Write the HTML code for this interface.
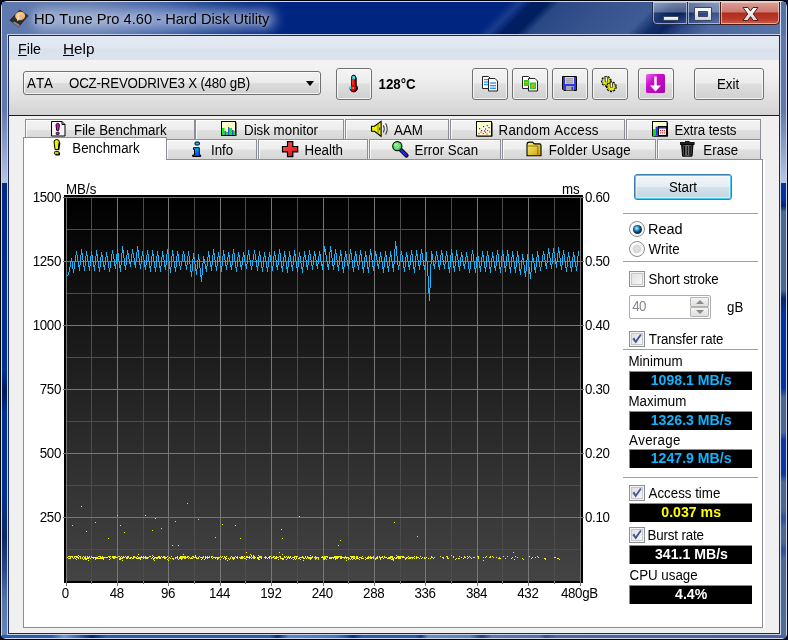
<!DOCTYPE html>
<html><head><meta charset="utf-8"><title>HD Tune Pro 4.60 - Hard Disk Utility</title>
<style>
*{box-sizing:border-box;margin:0;padding:0}
html,body{width:788px;height:640px;overflow:hidden;background:#04071c}
body{font-family:"Liberation Sans",sans-serif;font-size:13.33px;color:#000;position:relative;font-kerning:none}
#win{position:absolute;left:0;top:0;width:788px;height:640px;overflow:hidden;border-radius:7px 7px 6px 6px;background:#000}
#win>div{position:absolute}
#frame{left:1px;top:1px;width:786px;height:638px;border-radius:6px 6px 5px 5px;background:#002a8a;box-shadow:inset 0 0 0 1px #cfd8ec}
#frameL,#frameR{top:30px;width:5px;height:606px;background:linear-gradient(#5f79af 0,#5f79af 80px,#b9c6e4 153px,#002a8a 153px,#00328f 340px,#001a58 362px,#00328f 382px,#00328f 465px,#0a2868 507px,#27498f 540px,#5375ad 570px,#6586bb 606px)}
#frameL{left:2px}
#frameR{left:781px;background:linear-gradient(#5f79af 0,#5f79af 80px,#b9c6e4 153px,#0034a0 153px,#0034a0 170px,#0a2560 176px,#4a6896 182px,#4a6896 260px,#0a2560 268px,#0034a0 285px,#0034a0 358px,#4a6890 368px,#4a6890 402px,#0a38a0 410px,#0a38a0 444px,#4a6890 452px,#4a6890 480px,#2a50a0 488px,#4a6890 498px,#4a6890 512px,#2a50a0 520px,#4a6890 530px,#4f6e9a 606px)}
#frameB{left:2px;top:635px;width:784px;height:3px;background:linear-gradient(90deg,#2d5cab 0,#2d5cab 50px,#7a9ad0 62px,#3a66b0 76px,#06245e 90px,#2d5cab 104px,#2d5cab 268px,#0a2a6a 276px,#5a86c8 287px,#4a78c0 333px,#2d5cab 343px,#0e2e6e 351px,#2d5cab 360px,#2d5cab 413px,#1a3a78 419px,#6a8cb8 426px,#5f82b2 468px,#1e3e78 480px,#5a7aaa 490px,#52729f 538px,#2f4f84 544px,#4a6a9c 554px,#46669a 784px)}
#title{left:2px;top:2px;width:784px;height:33px;overflow:hidden;background:#002580}
#glow{position:absolute;left:-2px;top:0;width:330px;height:33px;background:linear-gradient(90deg,#5f79af 0,#5f79af 90px,#3d5ca4 160px,#123a8c 215px,#002580 250px)}
#glow2{position:absolute;left:30px;top:7px;width:244px;height:21px;border-radius:10px;background:rgba(220,228,246,.5);filter:blur(6px)}
#streaks{position:absolute;left:430px;top:0;width:354px;height:33px;overflow:hidden}
#streaks i{position:absolute;left:-40px;top:0;width:440px;height:33px;transform:skewX(-45deg);background:linear-gradient(90deg,#002580 0,#002580 100px,#1a3b8c 112px,#0c2c7c 118px,#001f60 124px,#001f60 140px,#2a4885 152px,#36538e 200px,#3f5b95 250px,#12306c 268px,#0c2560 282px,#2c4a88 300px,#4c689f 326px,#5673aa 400px,#5a76ac 440px)}
#edge{left:7px;top:34px;width:774px;height:601px;border:1px solid #c8d2ea;box-shadow:inset 0 0 0 1px #1a2a5a}
.ttl{text-shadow:0 0 5px rgba(255,255,255,.55)}
#cap{left:652px;top:2px;width:128px;height:23px}
.cbt{position:absolute;top:0;height:23px;border:1px solid #222c46;border-top:none;background:linear-gradient(rgba(255,255,255,.40) 0,rgba(255,255,255,.26) 45%,rgba(0,0,30,.14) 50%,rgba(255,255,255,.05) 100%);box-shadow:inset 0 0 0 1px rgba(220,230,245,.6)}
.cbt.red{background:linear-gradient(#dba098 0,#cb7a71 45%,#b22c1d 50%,#b93a2a 78%,#c8604a 100%);border-color:#4a1a16;box-shadow:inset 0 0 0 1px rgba(255,225,220,.6)}
#client{left:9px;top:36px;width:770px;height:597px;background:#f0f0f0}
#menubar{left:9px;top:36px;width:770px;height:24px;background:linear-gradient(#e2e9f2,#dfe6f0 50%,#d9e1ec 55%,#dbe3ee)}
.t{white-space:nowrap;line-height:1}
#combo{left:23px;top:71px;width:298px;height:24px;border:1px solid #707070;border-radius:3px;background:linear-gradient(#f2f2f2,#ebebeb 48%,#dddddd 52%,#cfcfcf);box-shadow:inset 0 0 0 1px rgba(255,255,255,.7)}
.btn{border:1px solid #707070;border-radius:3px;background:linear-gradient(#f3f3f3,#ececec 46%,#dedede 50%,#d0d0d0);box-shadow:inset 0 0 0 1px rgba(255,255,255,.75)}
#panel{left:23px;top:159px;width:740px;height:469px;background:#fff;border:1px solid #8b8e97}
.tab{border:1px solid #8b8e97;border-bottom:none;background:linear-gradient(#f3f3f3,#ededed 48%,#e0e0e0 52%,#d6d6d6);box-shadow:inset 1px 1px 0 rgba(255,255,255,.8)}
#seltab{left:23px;top:137px;width:144px;height:23px;background:#fff;border:1px solid #8b8e97;border-bottom:none}
.lcd{background:#000;width:123px;height:19px;left:629px;border-top:1px solid #8a8a8a;border-left:1px solid #8a8a8a;text-align:center;font-weight:bold;font-size:13.33px;line-height:18px;white-space:nowrap}
.lcd span{display:inline-block;transform:scale(1.06,1.04);transform-origin:50% 80%}
.cb{width:16px;height:16px;border:1px solid #8e8f8f;background:linear-gradient(135deg,#dcdcdc,#fbfbfb);box-shadow:inset 0 0 0 1px #f4f4f4, inset 0 0 0 2px #c4c8cc}
.cb svg{position:absolute;left:-1px;top:-1px}
.sep{height:1px;background:#a0a0a0;left:623px;width:135px}
#start{left:634px;top:174px;width:98px;height:26px;border:1px solid #3c7fb1;border-radius:3px;background:linear-gradient(#f2f6f9,#e6eef3 48%,#d3e1e9 52%,#c4d8e3);box-shadow:inset 0 0 0 1px #45cdf6, inset 0 0 0 2px rgba(255,255,255,.45)}
.radio{width:16px;height:16px;border-radius:50%;border:1px solid #8a8c8e;background:radial-gradient(circle at 50% 50%,#e2e4e6 0,#d4d6d9 3.6px,#f4f4f4 4.6px,#fff 5.2px,#fafafa 7px)}
.radio.on::after{content:"";position:absolute;left:2.5px;top:2.5px;width:9px;height:9px;border-radius:50%;background:radial-gradient(circle 5.2px at 42% 38%,#c4f2ff 0,#37a8dc 35%,#1a5a8c 62%,#0e2e4c 85%,#142f4a 100%)}
#spin{left:629px;top:295px;width:82px;height:24px;border:1px solid #abadb3;border-radius:2px;background:#fff}
.spb{width:19px;height:10px;border:1px solid #b4b4b4;border-radius:1px;background:linear-gradient(#f4f4f4,#dedede)}
.spb i{position:absolute;left:4.5px;width:0;height:0;border-left:4px solid transparent;border-right:4px solid transparent}
.spb i.up{top:1.5px;border-bottom:4.5px solid #8a8a8a}
.spb i.dn{top:2px;border-top:4.5px solid #8a8a8a}
#toolbar{left:9px;top:60px;width:770px;height:55px;background:linear-gradient(#f3f3f3 0,#f0f0f0 30%,#e2e2e2 65%,#d3d3d3 100%)}
#rline{left:780px;top:2px;width:1px;height:32px;background:rgba(232,238,250,.85)}
</style></head><body>
<div id="win">
<div id="frame"></div>
<div id="frameL"></div><div id="frameR"></div><div id="frameB"></div>
<div id="title"><div id="glow"></div><div id="glow2"></div><div id="streaks"><i></i></div></div>
<div id="edge"></div><div id="rline"></div>
<svg style="position:absolute;left:8px;top:7.5px" width="22" height="22" viewBox="8 7 22 22">
<defs><radialGradient id="pl" cx=".45" cy=".4" r=".6"><stop offset="0" stop-color="#ffe2b0"/><stop offset="1" stop-color="#f0a850"/></radialGradient></defs>
<polygon points="19.7,9 28.2,14.8 18.5,26 9.8,19.3" fill="#2c2c30" stroke="#1c1c20" stroke-width=".6"/>
<polygon points="14.5,20.5 20,24 18.5,26 12.6,21.6" fill="#9a9aa0" opacity=".8"/>
<ellipse cx="20.2" cy="15" rx="5.1" ry="4.3" fill="url(#pl)" transform="rotate(-12 20.2 15)"/>
<ellipse cx="20.6" cy="15" rx="1.5" ry="1.3" fill="#b8b8c4"/>
<path d="M17.6 19.8 L18.8 16" stroke="#f4f4f4" stroke-width="1"/>
</svg>
<div class="t ttl" style="top:10.90px;font-size:15px;left:34px;transform:scale(0.977,1);transform-origin:0 12.70px;">HD Tune Pro 4.60 - Hard Disk Utility</div>

<div id="cap">
<div class="cbt" style="left:0;width:36px;border-radius:0 0 0 5px"></div>
<div class="cbt" style="left:35px;width:34px"></div>
<div class="cbt red" style="left:68px;width:60px;border-radius:0 0 5px 0"></div>
<svg style="position:absolute;left:0;top:-1px" width="128" height="24"><defs><linearGradient id="xg" x1="0" y1="0" x2="0" y2="1"><stop offset="0" stop-color="#fff"/><stop offset="1" stop-color="#d4d4d8"/></linearGradient></defs>
<rect x="11.5" y="15.5" width="15" height="4" fill="url(#xg)" stroke="#3a4660" stroke-width="1"/>
<path d="M42.5 6.5h17v13h-17z M46.5 10.5v5h9v-5z" fill="url(#xg)" fill-rule="evenodd" stroke="#3a4660" stroke-width="1"/>
<path d="M91 6.5 h5 l2.5 3.6 l2.5 -3.6 h5 l-4.8 6.4 l5 6.6 h-5 l-2.7 -3.9 l-2.7 3.9 h-5 l5 -6.6 z" fill="url(#xg)" stroke="#4a2220" stroke-width="1"/>
</svg></div>
<div id="client"></div><div id="menubar"></div>
<div class="t " style="top:41.10px;font-size:15px;left:18px;transform:scale(0.95,1);transform-origin:0 12.70px;"><u>F</u>ile</div>

<div class="t " style="top:41.10px;font-size:15px;left:62.5px;transform:scale(1.02,1);transform-origin:0 12.70px;"><u>H</u>elp</div>

<div id="toolbar"></div>
<div style="left:9px;top:115px;width:770px;height:1px;background:#1c1c1c"></div>
<div id="combo"></div>
<div class="t " style="top:77.22px;font-size:13.33px;left:27px;transform:scale(1,1.09);transform-origin:0 11.28px;">ATA</div>

<div class="t " style="top:77.22px;font-size:13.33px;left:69px;transform:scale(1,1.09);transform-origin:0 11.28px;letter-spacing:-.2px;">OCZ-REVODRIVE3 X (480 gB)</div>

<div style="left:305.5px;top:81px;width:0;height:0;border-left:4.5px solid transparent;border-right:4.5px solid transparent;border-top:5px solid #000"></div>
<div class="btn" style="left:336px;top:68px;width:36px;height:32px"></div>
<div class="btn" style="left:472px;top:68px;width:36px;height:32px"></div>
<div class="btn" style="left:512px;top:68px;width:36px;height:32px"></div>
<div class="btn" style="left:552px;top:68px;width:36px;height:32px"></div>
<div class="btn" style="left:592px;top:68px;width:36px;height:32px"></div>
<div class="btn" style="left:638px;top:68px;width:36px;height:32px"></div>
<div class="btn" style="left:694px;top:68px;width:70px;height:32px"></div>
<div class="t " style="top:78.42px;font-size:13.33px;left:378.5px;transform:scale(1,1.09);transform-origin:0 11.28px;font-weight:bold;">128°C</div>

<div class="t " style="top:78.22px;font-size:13.33px;left:628px;width:200px;text-align:center;transform:scale(1,1.09);transform-origin:50% 11.28px;">Exit</div>

<svg style="position:absolute;left:0;top:60px" width="788" height="50" viewBox="0 60 788 50">
<defs>
<linearGradient id="mg" x1="0" y1="0" x2="1" y2="1"><stop offset="0" stop-color="#e46ae4"/><stop offset=".35" stop-color="#cc10cc"/><stop offset="1" stop-color="#a800a8"/></linearGradient>
</defs>
<!-- thermometer -->
<g>
<path d="M351.7 77 a2 1.8 0 0 1 4 0 v8.4 a3.7 3.5 0 1 1 -4 0 z" fill="#e80000" stroke="#000" stroke-width="1"/>
<path d="M356 77.5v8 a3.6 3.4 0 0 1 -1.5 5.6" fill="none" stroke="#000" stroke-width="1.3"/>
<rect x="352.2" y="76.2" width="3" height="3" fill="#30e4f0"/>
<rect x="349.6" y="86" width="1.5" height="3" fill="#40e0f0"/>
<rect x="352.6" y="87.4" width="1.3" height="1.3" fill="#fff"/>
<rect x="352.4" y="79.4" width=".9" height="5.6" fill="#ff6060"/>
</g>
<!-- copy text -->
<g stroke="#222" stroke-width="1">
<path d="M482.5 76.5h6l2 2v10h-8z" fill="#fff"/>
<path d="M488.5 78.5h6.5l2.5 2.5v10h-9z" fill="#fff"/>
</g>
<g fill="#1e8cff"><rect x="484" y="79" width="4" height="1.2"/><rect x="484" y="81.5" width="4" height="1.2"/><rect x="484" y="84" width="4" height="1.2"/>
<rect x="490" y="82.4" width="6" height="1.3"/><rect x="490" y="85" width="6" height="1.3"/><rect x="490" y="87.6" width="6" height="1.3"/></g>
<!-- copy screenshot -->
<g stroke="#222" stroke-width="1">
<path d="M522.5 76.5h6l2 2v10h-8z" fill="#fff"/>
<path d="M528.5 78.5h6.5l2.5 2.5v10h-9z" fill="#fff"/>
</g>
<rect x="524" y="80" width="5" height="6" fill="#30c830"/><rect x="525.5" y="82" width="2.2" height="2.4" fill="#f0d000"/><rect x="526.2" y="83" width="1" height="1" fill="#e02020"/>
<rect x="530" y="82.5" width="6" height="6.5" fill="#30c830"/><rect x="531.5" y="84.5" width="3" height="3" fill="#f0d000"/><rect x="532.5" y="85.5" width="1.2" height="1.2" fill="#e02020"/>
<!-- floppy -->
<path d="M562.5 76.5h14v14h-12.5l-1.5-1.5z" fill="#3434e8" stroke="#000" stroke-width="1"/>
<rect x="565" y="77" width="9" height="7" fill="#d8d8d8"/>
<g fill="#8a8a8a"><rect x="566" y="78.4" width="7" height="1"/><rect x="566" y="80.4" width="7" height="1"/><rect x="566" y="82.4" width="7" height="1"/></g>
<rect x="566" y="86" width="8" height="4.5" fill="#a8a8a8"/><rect x="571.4" y="86.8" width="1.8" height="3.2" fill="#3434e8"/>
<!-- gears -->
<g><circle cx="606.3" cy="81.3" r="3.8" fill="#000" stroke="#000" stroke-width="3.2" stroke-dasharray="1.645 1.008"/><circle cx="606.3" cy="81.3" r="3.4" fill="#eeee00" stroke="#e6e600" stroke-width="1.6" stroke-dasharray="0.997 1.377" stroke-dashoffset="-0.237"/><path d="M606.3 75.89999999999999 l1.1 1.6 v4.4 h-2.2 v-4.4 z" fill="#d0d0d4" stroke="#2a2a2a" stroke-width=".7"/><rect x="606.0999999999999" y="77.7" width=".8" height="4" fill="#fff"/><circle cx="611.4" cy="86.8" r="3.8" fill="#000" stroke="#000" stroke-width="3.2" stroke-dasharray="1.645 1.008"/><circle cx="611.4" cy="86.8" r="3.4" fill="#eeee00" stroke="#e6e600" stroke-width="1.6" stroke-dasharray="0.997 1.377" stroke-dashoffset="-0.237"/><path d="M611.4 81.39999999999999 l1.1 1.6 v4.4 h-2.2 v-4.4 z" fill="#d0d0d4" stroke="#2a2a2a" stroke-width=".7"/><rect x="611.1999999999999" y="83.2" width=".8" height="4" fill="#fff"/></g>
<!-- download -->
<rect x="646" y="74" width="19" height="19" rx="1.5" fill="url(#mg)"/>
<path d="M654.3 76.5h2.4v9h4.3l-5.5 6l-5.5-6h4.3z" fill="#fff"/>
</svg>

<div id="panel"></div><div style="left:763px;top:160px;width:2px;height:468px;background:#fff"></div>
<div class="tab" style="left:25px;top:119px;width:170px;height:21px"></div>
<div class="tab" style="left:195px;top:119px;width:149px;height:21px"></div>
<div class="tab" style="left:345px;top:119px;width:104px;height:21px"></div>
<div class="tab" style="left:450px;top:119px;width:175px;height:21px"></div>
<div class="tab" style="left:626px;top:119px;width:135px;height:21px"></div>
<div class="tab" style="left:166px;top:139px;width:91px;height:20px"></div>
<div class="tab" style="left:258px;top:139px;width:110px;height:20px"></div>
<div class="tab" style="left:369px;top:139px;width:132px;height:20px"></div>
<div class="tab" style="left:502px;top:139px;width:154px;height:20px"></div>
<div class="tab" style="left:657px;top:139px;width:104px;height:20px"></div>
<div id="seltab"></div>
<div class="t " style="top:123.72px;font-size:13.33px;left:74px;transform:scale(1,1.09);transform-origin:0 11.28px;letter-spacing:0px;">File Benchmark</div>

<div class="t " style="top:123.72px;font-size:13.33px;left:244px;transform:scale(1,1.09);transform-origin:0 11.28px;letter-spacing:0px;">Disk monitor</div>

<div class="t " style="top:123.72px;font-size:13.33px;left:394px;transform:scale(1,1.09);transform-origin:0 11.28px;letter-spacing:0px;">AAM</div>

<div class="t " style="top:123.72px;font-size:13.33px;left:498.5px;transform:scale(1,1.09);transform-origin:0 11.28px;letter-spacing:0.25px;">Random Access</div>

<div class="t " style="top:123.72px;font-size:13.33px;left:674.5px;transform:scale(1,1.09);transform-origin:0 11.28px;letter-spacing:-0.1px;">Extra tests</div>

<div class="t " style="top:141.92px;font-size:13.33px;left:72.3px;transform:scale(1,1.09);transform-origin:0 11.28px;">Benchmark</div>

<div class="t " style="top:144.12px;font-size:13.33px;left:211px;transform:scale(1,1.09);transform-origin:0 11.28px;letter-spacing:0px;">Info</div>

<div class="t " style="top:144.12px;font-size:13.33px;left:304.5px;transform:scale(1,1.09);transform-origin:0 11.28px;letter-spacing:0px;">Health</div>

<div class="t " style="top:144.12px;font-size:13.33px;left:414.5px;transform:scale(1,1.09);transform-origin:0 11.28px;letter-spacing:0px;">Error Scan</div>

<div class="t " style="top:144.12px;font-size:13.33px;left:548.8px;transform:scale(1,1.09);transform-origin:0 11.28px;letter-spacing:0.17px;">Folder Usage</div>

<div class="t " style="top:144.12px;font-size:13.33px;left:703.3px;transform:scale(1,1.09);transform-origin:0 11.28px;letter-spacing:0px;">Erase</div>

<svg style="position:absolute;left:0;top:116px" width="788" height="44" viewBox="0 116 788 44">
<defs>
<linearGradient id="ig" x1="0" y1="0" x2="0" y2="1"><stop offset="0" stop-color="#00b8ff"/><stop offset="1" stop-color="#0030ff"/></linearGradient>
<linearGradient id="rg" x1="0" y1="0" x2="1" y2="1"><stop offset="0" stop-color="#ff5a5a"/><stop offset="1" stop-color="#d00808"/></linearGradient>
<linearGradient id="fg" x1="0" y1="0" x2="1" y2="1"><stop offset="0" stop-color="#fff27a"/><stop offset="1" stop-color="#c8a000"/></linearGradient>
<radialGradient id="gg" cx=".35" cy=".3" r=".8"><stop offset="0" stop-color="#90ff90"/><stop offset="1" stop-color="#10c030"/></radialGradient>
<linearGradient id="tg" x1="0" y1="0" x2="1" y2="0"><stop offset="0" stop-color="#1a1a1a"/><stop offset=".5" stop-color="#8a8a8a"/><stop offset="1" stop-color="#1a1a1a"/></linearGradient>
</defs>
<!-- File Benchmark: page + magenta ! -->
<path d="M51.5 121.5h10.5l3 3v11.5h-13.5z" fill="#f4f4f4" stroke="#000" stroke-width="1"/>
<path d="M62 121.5v3h3" fill="none" stroke="#000" stroke-width="1"/>
<path d="M56 125 q0-1.6 1.7-1.6 q1.7 0 1.7 1.6 l-.7 5.4 h-2z" fill="#e000e0" stroke="#000" stroke-width=".9"/>
<rect x="56.2" y="132.2" width="3" height="2.4" rx=".8" fill="#e000e0" stroke="#000" stroke-width=".8"/>
<!-- Benchmark: yellow ! -->
<path d="M54 142 q0-2.4 2.7-2.4 q2.7 0 2.7 2.4 l-1.1 7.6 h-3.2z" fill="#f0f000" stroke="#000" stroke-width="1"/>
<path d="M59.6 142.5 l-1.1 7.6" stroke="#000" stroke-width="1.6" fill="none"/>
<rect x="54.5" y="151.4" width="4.4" height="3" rx="1" fill="#d8d800" stroke="#000" stroke-width="1"/>
<path d="M55.5 155 h4 v-2.5" stroke="#000" stroke-width="1" fill="none"/>
<!-- Disk monitor -->
<rect x="222.5" y="122.5" width="14" height="13.5" fill="#000"/>
<rect x="221.5" y="121.5" width="14" height="14" fill="#ffffc8" stroke="#000" stroke-width="1"/>
<g fill="#10f010"><rect x="222" y="128" width="2.5" height="7"/><rect x="226" y="132" width="2" height="3"/><rect x="229" y="128" width="3" height="7"/><rect x="233.5" y="131" width="1.5" height="4"/></g>
<g fill="#4040ff"><rect x="224.5" y="131" width="1.6" height="4"/><rect x="228" y="127" width="1.2" height="8"/><rect x="232" y="130" width="1.6" height="5"/></g>
<!-- Info -->
<rect x="195" y="142" width="4.4" height="3" rx="1" fill="#18b8ff" stroke="#000" stroke-width="1"/>
<path d="M193.5 147.7h5.8v7.3h1.4v1.5h-8v-1.5h1.8v-5.6h-1z" fill="url(#ig)" stroke="#000" stroke-width="1"/>
<!-- Health -->
<path d="M287.5 141.7h5.3v4.8h4.9v5.3h-4.9v4.8h-5.3v-4.8h-5v-5.3h5z" fill="url(#rg)" stroke="#000" stroke-width="1.2"/>
<!-- AAM speaker -->
<path d="M371.5 126.3h3l6.6-5v15l-6.6-5h-3z" fill="#f0f000" stroke="#000" stroke-width="1.1"/>
<path d="M378 123.6v10.4" stroke="#707000" stroke-width=".8"/>
<ellipse cx="379.6" cy="128.8" rx=".9" ry="1.6" fill="#555"/>
<path d="M383.3 125.2q2 3.6 0 7.2 M385.6 123.2q3.2 5.6 0 11.2" stroke="#444" stroke-width="1.1" fill="none"/>
<!-- Error scan magnifier -->
<path d="M400.5 149.5l6 6" stroke="#000" stroke-width="4.2" stroke-linecap="round"/>
<path d="M401 150l5.3 5.3" stroke="#2828d8" stroke-width="2.4" stroke-linecap="round"/>
<circle cx="397.3" cy="146.2" r="4.6" fill="url(#gg)" stroke="#000" stroke-width="1.1"/>
<path d="M395 145.6l2-2 M396.6 148.6l3-3" stroke="#e8ffe8" stroke-width=".9"/>
<!-- Random Access -->
<rect x="477.5" y="122.5" width="15" height="14" fill="#000"/>
<rect x="476.5" y="121.5" width="15" height="14.5" fill="#ffffd0" stroke="#000" stroke-width="1"/>
<g fill="#2020ff"><rect x="479" y="128" width="1.2" height="1.2"/><rect x="481" y="130" width="1.2" height="1.2"/><rect x="483" y="126" width="1.2" height="1.2"/><rect x="485" y="128.4" width="1.2" height="1.2"/><rect x="486.6" y="125" width="1.2" height="1.2"/><rect x="488.4" y="127" width="1.2" height="1.2"/><rect x="484" y="130.4" width="1.2" height="1.2"/></g>
<g fill="#ff2020"><rect x="478.4" y="133" width="1.2" height="1.2"/><rect x="480.4" y="131.6" width="1.2" height="1.2"/><rect x="482.6" y="133" width="1.2" height="1.2"/><rect x="485" y="131.6" width="1.2" height="1.2"/><rect x="487" y="130" width="1.2" height="1.2"/><rect x="489" y="131.4" width="1.2" height="1.2"/><rect x="486.4" y="133.4" width="1.2" height="1.2"/></g>
<!-- Folder -->
<path d="M527 144.5q0-2.4 2.4-2.4h3.2l1.6 1.8h5.2q1.6 0 1.6 1.6v10.3h-14z" fill="url(#fg)" stroke="#000" stroke-width="1.1"/>
<path d="M527 146h10.8v10" fill="none" stroke="#7a6000" stroke-width=".8"/>
<!-- Extra tests -->
<rect x="653.5" y="122.5" width="14.5" height="14" fill="#000"/>
<rect x="652.5" y="121.5" width="14.5" height="14.5" fill="#ffffd0" stroke="#000" stroke-width="1"/>
<rect x="653" y="129" width="2.6" height="6.5" fill="#10e010"/><rect x="655.6" y="126.6" width="2.4" height="9" fill="#3030ff"/>
<rect x="658.5" y="126.5" width="8" height="9" fill="#fff" stroke="#000" stroke-width="1"/>
<rect x="659" y="127" width="7" height="1.6" fill="#3030c0"/>
<g fill="#e02020"><rect x="660" y="130" width="1.2" height="1.2"/><rect x="662" y="130" width="1.2" height="1.2"/><rect x="664" y="130" width="1.2" height="1.2"/><rect x="660" y="132.4" width="1.2" height="1.2"/><rect x="662" y="132.4" width="1.2" height="1.2"/><rect x="664" y="132.4" width="1.2" height="1.2"/></g>
<!-- Erase trash -->
<path d="M681.6 144.6h11.4l-1 11.6h-9.4z" fill="url(#tg)" stroke="#000" stroke-width="1"/>
<rect x="680.5" y="142.4" width="13.6" height="2.2" fill="#222" stroke="#000" stroke-width=".8"/>
<rect x="685" y="140.9" width="4.6" height="1.6" fill="#222"/>
<path d="M684.6 146v9 M687.3 146v9 M690 146v9" stroke="#000" stroke-width="1"/>
</svg>

<svg id="chart" style="position:absolute;left:0;top:0" width="788" height="640">
<defs><linearGradient id="bg" x1="0" y1="0" x2="0" y2="1"><stop offset="0" stop-color="#000"/><stop offset="1" stop-color="#444"/></linearGradient></defs>
<rect x="64" y="195" width="519" height="388" fill="#000"/>
<rect x="66" y="197" width="515" height="384" fill="url(#bg)"/>
<g fill="#4c4c4c"><rect x="91" y="197" width="1" height="384"/><rect x="143" y="197" width="1" height="384"/><rect x="194" y="197" width="1" height="384"/><rect x="245" y="197" width="1" height="384"/><rect x="297" y="197" width="1" height="384"/><rect x="348" y="197" width="1" height="384"/><rect x="400" y="197" width="1" height="384"/><rect x="451" y="197" width="1" height="384"/><rect x="502" y="197" width="1" height="384"/><rect x="554" y="197" width="1" height="384"/><rect x="66" y="229" width="515" height="1"/><rect x="66" y="293" width="515" height="1"/><rect x="66" y="357" width="515" height="1"/><rect x="66" y="421" width="515" height="1"/><rect x="66" y="485" width="515" height="1"/><rect x="66" y="549" width="515" height="1"/></g><g fill="#767676"><rect x="66" y="197" width="1" height="384"/><rect x="117" y="197" width="1" height="384"/><rect x="168" y="197" width="1" height="384"/><rect x="220" y="197" width="1" height="384"/><rect x="271" y="197" width="1" height="384"/><rect x="323" y="197" width="1" height="384"/><rect x="374" y="197" width="1" height="384"/><rect x="425" y="197" width="1" height="384"/><rect x="477" y="197" width="1" height="384"/><rect x="528" y="197" width="1" height="384"/><rect x="580" y="197" width="1" height="384"/><rect x="66" y="197" width="515" height="1"/><rect x="66" y="261" width="515" height="1"/><rect x="66" y="325" width="515" height="1"/><rect x="66" y="389" width="515" height="1"/><rect x="66" y="453" width="515" height="1"/><rect x="66" y="517" width="515" height="1"/></g><g fill="#7a7a7a"><rect x="63" y="197" width="3" height="1"/><rect x="581" y="197" width="3" height="1"/><rect x="63" y="261" width="3" height="1"/><rect x="581" y="261" width="3" height="1"/><rect x="63" y="325" width="3" height="1"/><rect x="581" y="325" width="3" height="1"/><rect x="63" y="389" width="3" height="1"/><rect x="581" y="389" width="3" height="1"/><rect x="63" y="453" width="3" height="1"/><rect x="581" y="453" width="3" height="1"/><rect x="63" y="517" width="3" height="1"/><rect x="581" y="517" width="3" height="1"/><rect x="66" y="581" width="1" height="5"/><rect x="91" y="581" width="1" height="3"/><rect x="117" y="581" width="1" height="5"/><rect x="143" y="581" width="1" height="3"/><rect x="168" y="581" width="1" height="5"/><rect x="194" y="581" width="1" height="3"/><rect x="220" y="581" width="1" height="5"/><rect x="245" y="581" width="1" height="3"/><rect x="271" y="581" width="1" height="5"/><rect x="297" y="581" width="1" height="3"/><rect x="323" y="581" width="1" height="5"/><rect x="348" y="581" width="1" height="3"/><rect x="374" y="581" width="1" height="5"/><rect x="400" y="581" width="1" height="3"/><rect x="425" y="581" width="1" height="5"/><rect x="451" y="581" width="1" height="3"/><rect x="477" y="581" width="1" height="5"/><rect x="502" y="581" width="1" height="3"/><rect x="528" y="581" width="1" height="5"/><rect x="554" y="581" width="1" height="3"/><rect x="580" y="581" width="1" height="5"/></g>
<path fill="none" stroke="#1fb2f2" stroke-width="1" d="M66.5 276v1M67.5 275v1M68.5 272v3M69.5 267v5M70.5 261v6M71.5 258v4M72.5 262v7M73.5 269v4M74.5 262v7M75.5 255v7M76.5 251v4M77.5 255v6M78.5 261v6M79.5 265v6M80.5 255v10M81.5 249v6M82.5 253v7M83.5 260v7M84.5 266v5M85.5 256v10M86.5 251v5M87.5 255v6M88.5 261v6M89.5 266v5M90.5 256v10M91.5 251v5M92.5 255v6M93.5 261v6M94.5 265v6M95.5 256v9M96.5 250v6M97.5 254v7M98.5 261v7M99.5 267v5M100.5 257v10M101.5 252v5M102.5 255v6M103.5 261v6M104.5 265v5M105.5 257v8M106.5 252v5M107.5 256v6M108.5 262v6M109.5 268v4M110.5 261v7M111.5 254v7M112.5 250v4M113.5 254v5M114.5 259v7M115.5 264v5M116.5 254v10M117.5 249v5M118.5 253v8M119.5 261v7M120.5 265v7M121.5 253v12M122.5 246v7M123.5 250v8M124.5 258v8M125.5 265v5M126.5 255v10M127.5 250v5M128.5 253v6M129.5 259v5M130.5 262v5M131.5 254v8M132.5 249v5M133.5 253v5M134.5 258v7M135.5 262v6M136.5 252v10M137.5 246v6M138.5 250v8M139.5 258v7M140.5 264v5M141.5 256v8M142.5 251v5M143.5 255v5M144.5 260v7M145.5 265v5M146.5 255v10M147.5 250v5M148.5 254v7M149.5 261v7M150.5 266v6M151.5 256v10M152.5 250v6M153.5 254v7M154.5 261v7M155.5 267v5M156.5 256v11M157.5 251v5M158.5 255v7M159.5 262v6M160.5 266v6M161.5 257v9M162.5 251v6M163.5 255v5M164.5 260v7M165.5 265v5M166.5 254v11M167.5 249v5M168.5 253v8M169.5 261v8M170.5 267v6M171.5 256v11M172.5 250v6M173.5 254v7M174.5 261v7M175.5 267v5M176.5 256v11M177.5 251v5M178.5 254v7M179.5 261v5M180.5 266v4M181.5 261v5M182.5 254v7M183.5 251v3M184.5 254v7M185.5 261v5M186.5 265v5M187.5 256v9M188.5 251v5M189.5 256v8M190.5 264v8M191.5 271v6M192.5 259v12M193.5 253v6M194.5 257v7M195.5 264v7M196.5 269v6M197.5 260v9M198.5 254v6M199.5 259v9M200.5 268v9M201.5 275v7M202.5 263v12M203.5 256v7M204.5 259v5M205.5 264v5M206.5 266v6M207.5 257v9M208.5 251v6M209.5 255v6M210.5 261v6M211.5 265v6M212.5 255v10M213.5 249v6M214.5 253v7M215.5 260v7M216.5 266v5M217.5 257v9M218.5 252v5M219.5 256v6M220.5 262v6M221.5 266v6M222.5 256v10M223.5 250v6M224.5 254v6M225.5 260v6M226.5 265v5M227.5 257v8M228.5 252v5M229.5 255v6M230.5 261v6M231.5 265v5M232.5 254v11M233.5 249v5M234.5 253v8M235.5 261v7M236.5 267v5M237.5 257v10M238.5 252v5M239.5 255v6M240.5 261v6M241.5 265v5M242.5 257v8M243.5 252v5M244.5 255v6M245.5 261v5M246.5 264v5M247.5 255v9M248.5 250v5M249.5 254v6M250.5 260v6M251.5 266v4M252.5 260v6M253.5 254v6M254.5 250v4M255.5 254v6M256.5 260v7M257.5 266v5M258.5 256v10M259.5 251v5M260.5 255v7M261.5 262v6M262.5 267v5M263.5 257v10M264.5 252v5M265.5 256v6M266.5 262v6M267.5 267v5M268.5 257v10M269.5 252v5M270.5 255v7M271.5 262v5M272.5 266v5M273.5 256v10M274.5 251v5M275.5 255v5M276.5 260v7M277.5 265v5M278.5 254v11M279.5 249v5M280.5 253v8M281.5 261v7M282.5 266v6M283.5 257v9M284.5 251v6M285.5 255v7M286.5 262v7M287.5 267v6M288.5 257v10M289.5 251v6M290.5 255v6M291.5 261v6M292.5 265v6M293.5 256v9M294.5 250v6M295.5 254v7M296.5 261v7M297.5 267v5M298.5 257v10M299.5 252v5M300.5 256v7M301.5 263v6M302.5 267v6M303.5 257v10M304.5 251v6M305.5 255v5M306.5 260v7M307.5 265v5M308.5 255v10M309.5 250v5M310.5 254v6M311.5 260v6M312.5 265v5M313.5 256v9M314.5 251v5M315.5 254v6M316.5 260v6M317.5 264v5M318.5 256v8M319.5 251v5M320.5 254v7M321.5 261v5M322.5 264v6M323.5 252v12M324.5 246v6M325.5 249v6M326.5 255v6M327.5 261v6M328.5 264v6M329.5 252v12M330.5 246v6M331.5 250v8M332.5 258v8M333.5 265v5M334.5 254v11M335.5 249v5M336.5 253v7M337.5 260v7M338.5 265v6M339.5 256v9M340.5 250v6M341.5 254v7M342.5 261v8M343.5 267v6M344.5 257v10M345.5 251v6M346.5 254v6M347.5 260v6M348.5 264v5M349.5 254v10M350.5 249v5M351.5 253v7M352.5 260v8M353.5 267v5M354.5 256v11M355.5 251v5M356.5 254v7M357.5 261v5M358.5 265v5M359.5 255v10M360.5 250v5M361.5 254v7M362.5 261v8M363.5 267v6M364.5 257v10M365.5 251v6M366.5 255v7M367.5 262v7M368.5 267v6M369.5 255v12M370.5 249v6M371.5 253v7M372.5 260v7M373.5 266v5M374.5 256v10M375.5 251v5M376.5 254v6M377.5 260v6M378.5 264v5M379.5 257v7M380.5 252v5M381.5 256v6M382.5 262v7M383.5 267v6M384.5 257v10M385.5 251v6M386.5 255v7M387.5 262v6M388.5 266v6M389.5 257v9M390.5 251v6M391.5 255v6M392.5 261v7M393.5 264v8M394.5 249v15M395.5 241v8M396.5 246v10M397.5 256v9M398.5 265v5M399.5 261v5M400.5 254v7M401.5 251v4M402.5 255v7M403.5 262v6M404.5 267v5M405.5 257v10M406.5 252v5M407.5 255v6M408.5 261v6M409.5 265v5M410.5 255v10M411.5 250v5M412.5 254v8M413.5 262v7M414.5 267v6M415.5 256v11M416.5 250v6M417.5 254v6M418.5 260v6M419.5 265v5M420.5 254v11M421.5 249v5M422.5 253v7M423.5 260v6M424.5 265v5M425.5 257v8M426.5 252v9M427.5 261v15M428.5 276v17M429.5 288v13M430.5 264v24M431.5 251v13M432.5 254v6M433.5 260v6M434.5 264v5M435.5 256v8M436.5 251v5M437.5 255v5M438.5 260v7M439.5 265v5M440.5 255v10M441.5 250v5M442.5 253v7M443.5 260v5M444.5 264v5M445.5 256v8M446.5 251v5M447.5 255v7M448.5 262v7M449.5 267v6M450.5 255v12M451.5 249v6M452.5 253v8M453.5 261v7M454.5 266v6M455.5 256v10M456.5 250v6M457.5 254v6M458.5 260v7M459.5 266v5M460.5 257v9M461.5 252v5M462.5 255v6M463.5 261v5M464.5 264v5M465.5 257v7M466.5 252v5M467.5 256v6M468.5 262v7M469.5 269v4M470.5 261v8M471.5 254v7M472.5 250v4M473.5 254v7M474.5 261v8M475.5 268v5M476.5 257v11M477.5 252v5M478.5 256v6M479.5 262v6M480.5 266v6M481.5 257v9M482.5 251v6M483.5 255v6M484.5 261v7M485.5 267v5M486.5 256v11M487.5 251v5M488.5 255v7M489.5 262v7M490.5 267v6M491.5 258v9M492.5 252v6M493.5 256v5M494.5 261v7M495.5 266v5M496.5 255v11M497.5 250v5M498.5 254v8M499.5 262v7M500.5 267v6M501.5 256v11M502.5 250v6M503.5 254v7M504.5 261v7M505.5 266v6M506.5 256v10M507.5 250v6M508.5 254v8M509.5 262v7M510.5 267v6M511.5 257v10M512.5 251v6M513.5 255v7M514.5 262v7M515.5 267v6M516.5 257v10M517.5 251v6M518.5 255v8M519.5 263v8M520.5 269v6M521.5 260v9M522.5 254v6M523.5 258v7M524.5 265v8M525.5 271v6M526.5 260v11M527.5 254v6M528.5 258v9M529.5 267v7M530.5 272v7M531.5 261v11M532.5 254v7M533.5 258v5M534.5 263v7M535.5 267v6M536.5 257v10M537.5 251v6M538.5 255v6M539.5 261v6M540.5 267v4M541.5 261v6M542.5 255v6M543.5 251v4M544.5 254v6M545.5 260v6M546.5 263v6M547.5 254v9M548.5 248v6M549.5 252v6M550.5 258v7M551.5 264v5M552.5 253v11M553.5 248v5M554.5 252v6M555.5 258v6M556.5 262v6M557.5 253v9M558.5 247v6M559.5 251v7M560.5 258v8M561.5 265v5M562.5 255v10M563.5 250v5M564.5 254v7M565.5 261v7M566.5 267v5M567.5 257v10M568.5 252v5M569.5 256v6M570.5 262v6M571.5 267v5M572.5 257v10M573.5 252v5M574.5 255v7M575.5 262v5M576.5 266v5M577.5 256v10M578.5 251v5"/>
<path fill="none" stroke="#f2f200" stroke-width="1" d="M187 503.5h1M81 506.5h1M117 515.5h1M145 515.5h1M299 516.5h1M155 518.5h1M198 519.5h1M175 521.5h1M95 522.5h1M394 522.5h1M222 524.5h1M72 525.5h1M120 525.5h1M235 525.5h1M161 528.5h1M281 529.5h1M152 530.5h1M86 531.5h1M124 532.5h1M417 536.5h1M215 537.5h1M108 538.5h1M240 538.5h1M282 538.5h1M340 540.5h1M172 545.5h1M178 545.5h1M338 545.5h1M246 552.5h1M279 552.5h1M513 552.5h1M138 554.5h1M183 554.5h1M250 554.5h1M282 554.5h1M78 555.5h1M152 555.5h1M195 555.5h1M251 555.5h1M253 555.5h1M258 555.5h1M310 555.5h1M396 555.5h1M451 555.5h1M68 556.5h5M74 556.5h4M79 556.5h2M83 556.5h1M85 556.5h1M87 556.5h1M89 556.5h1M91 556.5h1M98 556.5h3M102 556.5h1M108 556.5h3M112 556.5h4M118 556.5h2M121 556.5h1M123 556.5h1M125 556.5h1M127 556.5h2M133 556.5h2M137 556.5h1M141 556.5h1M143 556.5h1M145 556.5h1M149 556.5h2M153 556.5h1M158 556.5h2M161 556.5h1M163 556.5h2M167 556.5h1M171 556.5h1M177 556.5h1M180 556.5h6M187 556.5h2M192 556.5h2M195 556.5h1M199 556.5h1M203 556.5h1M205 556.5h1M207 556.5h1M209 556.5h1M211 556.5h2M220 556.5h1M222 556.5h1M224 556.5h1M226 556.5h1M231 556.5h1M235 556.5h1M237 556.5h1M241 556.5h2M244 556.5h1M246 556.5h2M249 556.5h1M251 556.5h1M253 556.5h2M259 556.5h3M265 556.5h1M269 556.5h2M273 556.5h2M276 556.5h1M279 556.5h2M284 556.5h1M286 556.5h1M288 556.5h1M290 556.5h1M294 556.5h4M302 556.5h1M305 556.5h1M307 556.5h1M312 556.5h1M315 556.5h1M322 556.5h1M324 556.5h4M334 556.5h8M345 556.5h1M350 556.5h5M356 556.5h2M362 556.5h1M368 556.5h1M370 556.5h1M373 556.5h1M377 556.5h1M379 556.5h1M382 556.5h1M384 556.5h1M390 556.5h3M397 556.5h7M408 556.5h1M414 556.5h1M416 556.5h1M420 556.5h1M431 556.5h1M440 556.5h1M446 556.5h2M453 556.5h1M459 556.5h1M464 556.5h1M467 556.5h1M469 556.5h1M477 556.5h2M486 556.5h1M490 556.5h1M492 556.5h1M503 556.5h1M507 556.5h1M515 556.5h1M529 556.5h1M537 556.5h1M67 557.5h1M70 557.5h1M72 557.5h1M74 557.5h1M76 557.5h3M80 557.5h1M82 557.5h1M84 557.5h2M87 557.5h3M91 557.5h7M100 557.5h8M109 557.5h1M112 557.5h6M120 557.5h1M122 557.5h3M126 557.5h3M130 557.5h2M133 557.5h4M138 557.5h11M152 557.5h1M154 557.5h7M162 557.5h5M169 557.5h1M175 557.5h3M179 557.5h9M189 557.5h1M191 557.5h1M193 557.5h4M198 557.5h1M200 557.5h4M205 557.5h5M211 557.5h1M213 557.5h7M221 557.5h1M224 557.5h2M230 557.5h1M232 557.5h3M236 557.5h2M239 557.5h5M246 557.5h5M252 557.5h4M257 557.5h5M264 557.5h3M268 557.5h2M271 557.5h3M275 557.5h4M280 557.5h1M284 557.5h2M287 557.5h4M292 557.5h3M296 557.5h1M299 557.5h5M305 557.5h1M307 557.5h6M314 557.5h5M321 557.5h5M327 557.5h1M329 557.5h10M340 557.5h9M351 557.5h4M356 557.5h2M359 557.5h3M365 557.5h1M367 557.5h7M376 557.5h2M379 557.5h4M384 557.5h3M388 557.5h5M394 557.5h1M396 557.5h5M402 557.5h3M406 557.5h2M409 557.5h5M416 557.5h3M422 557.5h1M424 557.5h1M426 557.5h1M431 557.5h2M434 557.5h1M442 557.5h2M447 557.5h1M453 557.5h1M461 557.5h1M464 557.5h2M468 557.5h1M470 557.5h1M473 557.5h2M478 557.5h1M483 557.5h1M485 557.5h1M489 557.5h2M493 557.5h1M496 557.5h1M499 557.5h1M512 557.5h1M517 557.5h1M532 557.5h1M535 557.5h1M538 557.5h1M554 557.5h2M68 558.5h3M73 558.5h1M75 558.5h1M78 558.5h1M80 558.5h1M82 558.5h1M84 558.5h5M90 558.5h1M93 558.5h1M95 558.5h9M110 558.5h1M113 558.5h2M119 558.5h4M126 558.5h2M129 558.5h2M132 558.5h2M136 558.5h5M143 558.5h1M145 558.5h3M151 558.5h1M153 558.5h2M156 558.5h2M159 558.5h2M164 558.5h2M168 558.5h1M170 558.5h1M172 558.5h2M175 558.5h1M177 558.5h1M179 558.5h4M184 558.5h2M188 558.5h1M190 558.5h3M196 558.5h3M202 558.5h1M205 558.5h1M207 558.5h1M212 558.5h1M215 558.5h1M217 558.5h2M223 558.5h1M225 558.5h2M228 558.5h1M230 558.5h1M232 558.5h3M237 558.5h1M240 558.5h3M244 558.5h2M249 558.5h1M251 558.5h1M253 558.5h2M257 558.5h2M261 558.5h1M265 558.5h1M267 558.5h1M269 558.5h1M271 558.5h1M274 558.5h3M280 558.5h4M287 558.5h1M289 558.5h1M291 558.5h1M294 558.5h1M296 558.5h1M298 558.5h2M303 558.5h2M306 558.5h1M308 558.5h4M315 558.5h2M318 558.5h1M323 558.5h3M329 558.5h3M333 558.5h1M335 558.5h3M340 558.5h2M344 558.5h1M346 558.5h1M348 558.5h2M351 558.5h1M353 558.5h2M356 558.5h3M361 558.5h3M366 558.5h3M370 558.5h2M373 558.5h1M375 558.5h3M380 558.5h1M383 558.5h1M387 558.5h4M392 558.5h2M395 558.5h2M398 558.5h3M405 558.5h2M408 558.5h3M412 558.5h1M414 558.5h1M416 558.5h1M419 558.5h1M421 558.5h1M424 558.5h2M428 558.5h1M430 558.5h1M433 558.5h1M443 558.5h1M447 558.5h2M456 558.5h1M458 558.5h2M463 558.5h1M467 558.5h1M471 558.5h1M478 558.5h1M498 558.5h3M505 558.5h1M511 558.5h1M522 558.5h1M531 558.5h1M544 558.5h2M557 558.5h2M76 559.5h1M83 559.5h1M85 559.5h2M95 559.5h1M103 559.5h1M109 559.5h1M119 559.5h2M140 559.5h1M153 559.5h1M167 559.5h1M173 559.5h1M178 559.5h1M181 559.5h1M201 559.5h1M204 559.5h1M217 559.5h1M220 559.5h1M225 559.5h1M229 559.5h1M233 559.5h1M246 559.5h1M258 559.5h2M278 559.5h1M282 559.5h2M286 559.5h1M293 559.5h1M295 559.5h1M300 559.5h1M310 559.5h1M315 559.5h1M318 559.5h1M323 559.5h2M326 559.5h1M335 559.5h1M348 559.5h1M350 559.5h1M352 559.5h1M355 559.5h1M359 559.5h1M365 559.5h1M375 559.5h1M380 559.5h1M391 559.5h3M405 559.5h1M455 559.5h1M514 559.5h1M523 559.5h1M545 559.5h1M559 559.5h1M88 560.5h1M122 560.5h1M154 560.5h1M168 560.5h1M227 560.5h1M303 560.5h1M346 560.5h1M393 560.5h1M483 560.5h1"/></svg>
<div class="t " style="top:191.02px;font-size:13.33px;right:727px;transform:scale(1,1.09);transform-origin:100% 11.28px;letter-spacing:-.35px;">1500</div>

<div class="t " style="top:255.02px;font-size:13.33px;right:727px;transform:scale(1,1.09);transform-origin:100% 11.28px;letter-spacing:-.35px;">1250</div>

<div class="t " style="top:319.02px;font-size:13.33px;right:727px;transform:scale(1,1.09);transform-origin:100% 11.28px;letter-spacing:-.35px;">1000</div>

<div class="t " style="top:383.02px;font-size:13.33px;right:727px;transform:scale(1,1.09);transform-origin:100% 11.28px;letter-spacing:-.35px;">750</div>

<div class="t " style="top:447.02px;font-size:13.33px;right:727px;transform:scale(1,1.09);transform-origin:100% 11.28px;letter-spacing:-.35px;">500</div>

<div class="t " style="top:511.02px;font-size:13.33px;right:727px;transform:scale(1,1.09);transform-origin:100% 11.28px;letter-spacing:-.35px;">250</div>

<div class="t " style="top:191.02px;font-size:13.33px;left:585px;transform:scale(1,1.09);transform-origin:0 11.28px;letter-spacing:-.35px;">0.60</div>

<div class="t " style="top:255.02px;font-size:13.33px;left:585px;transform:scale(1,1.09);transform-origin:0 11.28px;letter-spacing:-.35px;">0.50</div>

<div class="t " style="top:319.02px;font-size:13.33px;left:585px;transform:scale(1,1.09);transform-origin:0 11.28px;letter-spacing:-.35px;">0.40</div>

<div class="t " style="top:383.02px;font-size:13.33px;left:585px;transform:scale(1,1.09);transform-origin:0 11.28px;letter-spacing:-.35px;">0.30</div>

<div class="t " style="top:447.02px;font-size:13.33px;left:585px;transform:scale(1,1.09);transform-origin:0 11.28px;letter-spacing:-.35px;">0.20</div>

<div class="t " style="top:511.02px;font-size:13.33px;left:585px;transform:scale(1,1.09);transform-origin:0 11.28px;letter-spacing:-.35px;">0.10</div>

<div class="t " style="top:587.22px;font-size:13.33px;left:-34.7px;width:200px;text-align:center;transform:scale(1,1.09);transform-origin:50% 11.28px;letter-spacing:-.35px;">0</div>

<div class="t " style="top:587.22px;font-size:13.33px;left:16.69999999999999px;width:200px;text-align:center;transform:scale(1,1.09);transform-origin:50% 11.28px;letter-spacing:-.35px;">48</div>

<div class="t " style="top:587.22px;font-size:13.33px;left:68.1px;width:200px;text-align:center;transform:scale(1,1.09);transform-origin:50% 11.28px;letter-spacing:-.35px;">96</div>

<div class="t " style="top:587.22px;font-size:13.33px;left:119.5px;width:200px;text-align:center;transform:scale(1,1.09);transform-origin:50% 11.28px;letter-spacing:-.35px;">144</div>

<div class="t " style="top:587.22px;font-size:13.33px;left:170.89999999999998px;width:200px;text-align:center;transform:scale(1,1.09);transform-origin:50% 11.28px;letter-spacing:-.35px;">192</div>

<div class="t " style="top:587.22px;font-size:13.33px;left:222.3px;width:200px;text-align:center;transform:scale(1,1.09);transform-origin:50% 11.28px;letter-spacing:-.35px;">240</div>

<div class="t " style="top:587.22px;font-size:13.33px;left:273.7px;width:200px;text-align:center;transform:scale(1,1.09);transform-origin:50% 11.28px;letter-spacing:-.35px;">288</div>

<div class="t " style="top:587.22px;font-size:13.33px;left:325.1px;width:200px;text-align:center;transform:scale(1,1.09);transform-origin:50% 11.28px;letter-spacing:-.35px;">336</div>

<div class="t " style="top:587.22px;font-size:13.33px;left:376.5px;width:200px;text-align:center;transform:scale(1,1.09);transform-origin:50% 11.28px;letter-spacing:-.35px;">384</div>

<div class="t " style="top:587.22px;font-size:13.33px;left:427.9px;width:200px;text-align:center;transform:scale(1,1.09);transform-origin:50% 11.28px;letter-spacing:-.35px;">432</div>

<div class="t " style="top:587.22px;font-size:13.33px;left:561px;transform:scale(1,1.09);transform-origin:0 11.28px;letter-spacing:-.35px;">480gB</div>

<div class="t " style="top:183.02px;font-size:13.33px;left:66px;transform:scale(1,1.09);transform-origin:0 11.28px;">MB/s</div>

<div class="t " style="top:183.02px;font-size:13.33px;left:562px;transform:scale(1,1.09);transform-origin:0 11.28px;">ms</div>

<div id="start"></div>
<div class="t " style="top:180.72px;font-size:13.33px;left:583px;width:200px;text-align:center;transform:scale(1,1.09);transform-origin:50% 11.28px;">Start</div>

<div class="sep" style="top:213px"></div>
<div class="sep" style="top:261px"></div>
<div class="sep" style="top:349px"></div>
<div class="sep" style="top:477px"></div>
<div class="radio on" style="left:629px;top:221px"></div>
<div class="t " style="top:222.92px;font-size:13.33px;left:648.2px;transform:scale(1.085,1.09);transform-origin:0 11.28px;">Read</div>

<div class="radio" style="left:629px;top:241px"></div>
<div class="t " style="top:242.92px;font-size:13.33px;left:648.5px;transform:scale(1,1.09);transform-origin:0 11.28px;">Write</div>

<div class="cb" style="left:629px;top:271px"></div>
<div class="t " style="top:273.42px;font-size:13.33px;left:648.5px;transform:scale(1,1.09);transform-origin:0 11.28px;letter-spacing:-.15px;">Short stroke</div>

<div id="spin"></div>
<div class="spb" style="left:690px;top:297px"><i class="up"></i></div><div class="spb" style="left:690px;top:307px"><i class="dn"></i></div>
<div class="t " style="top:300.42px;font-size:13.33px;left:632.3px;transform:scale(1,1.09);transform-origin:0 11.28px;color:#868690;letter-spacing:-.6px;">40</div>

<div class="t " style="top:300.92px;font-size:13.33px;left:727px;transform:scale(1,1.09);transform-origin:0 11.28px;">gB</div>

<div class="cb" style="left:629px;top:331px"><svg width="16" height="16" viewBox="0 0 16 16"><path d="M3.4 7.9 L5.3 6.5 L6.7 9.3 L11.2 3 L12.6 4 L6.8 12.6 Z" fill="#44569a"/></svg></div>
<div class="t " style="top:333.42px;font-size:13.33px;left:648.7px;transform:scale(1,1.09);transform-origin:0 11.28px;letter-spacing:-.13px;">Transfer rate</div>

<div class="t " style="top:355.42px;font-size:13.33px;left:628.5px;transform:scale(1,1.09);transform-origin:0 11.28px;">Minimum</div>

<div class="t " style="top:395.42px;font-size:13.33px;left:628.5px;transform:scale(1,1.09);transform-origin:0 11.28px;">Maximum</div>

<div class="t " style="top:433.62px;font-size:13.33px;left:629px;transform:scale(1,1.09);transform-origin:0 11.28px;letter-spacing:.3px;">Average</div>

<div class="lcd" style="top:371px;color:#12b2fc"><span>1098.1 MB/s</span></div>
<div class="lcd" style="top:411px;color:#12b2fc"><span>1326.3 MB/s</span></div>
<div class="lcd" style="top:449px;color:#12b2fc"><span>1247.9 MB/s</span></div>
<div class="cb" style="left:629px;top:485px"><svg width="16" height="16" viewBox="0 0 16 16"><path d="M3.4 7.9 L5.3 6.5 L6.7 9.3 L11.2 3 L12.6 4 L6.8 12.6 Z" fill="#44569a"/></svg></div>
<div class="t " style="top:487.42px;font-size:13.33px;left:648.5px;transform:scale(1,1.09);transform-origin:0 11.28px;">Access time</div>

<div class="lcd" style="top:503px;color:#ffff00"><span>0.037 ms</span></div>
<div class="cb" style="left:629px;top:527px"><svg width="16" height="16" viewBox="0 0 16 16"><path d="M3.4 7.9 L5.3 6.5 L6.7 9.3 L11.2 3 L12.6 4 L6.8 12.6 Z" fill="#44569a"/></svg></div>
<div class="t " style="top:528.92px;font-size:13.33px;left:647.5px;transform:scale(1,1.09);transform-origin:0 11.28px;letter-spacing:-.15px;">Burst rate</div>

<div class="lcd" style="top:545px;color:#fff"><span>341.1 MB/s</span></div>
<div class="t " style="top:569.42px;font-size:13.33px;left:629.5px;transform:scale(1,1.09);transform-origin:0 11.28px;">CPU usage</div>

<div class="lcd" style="top:585px;color:#fff"><span>4.4%</span></div>
</div>
</body></html>
